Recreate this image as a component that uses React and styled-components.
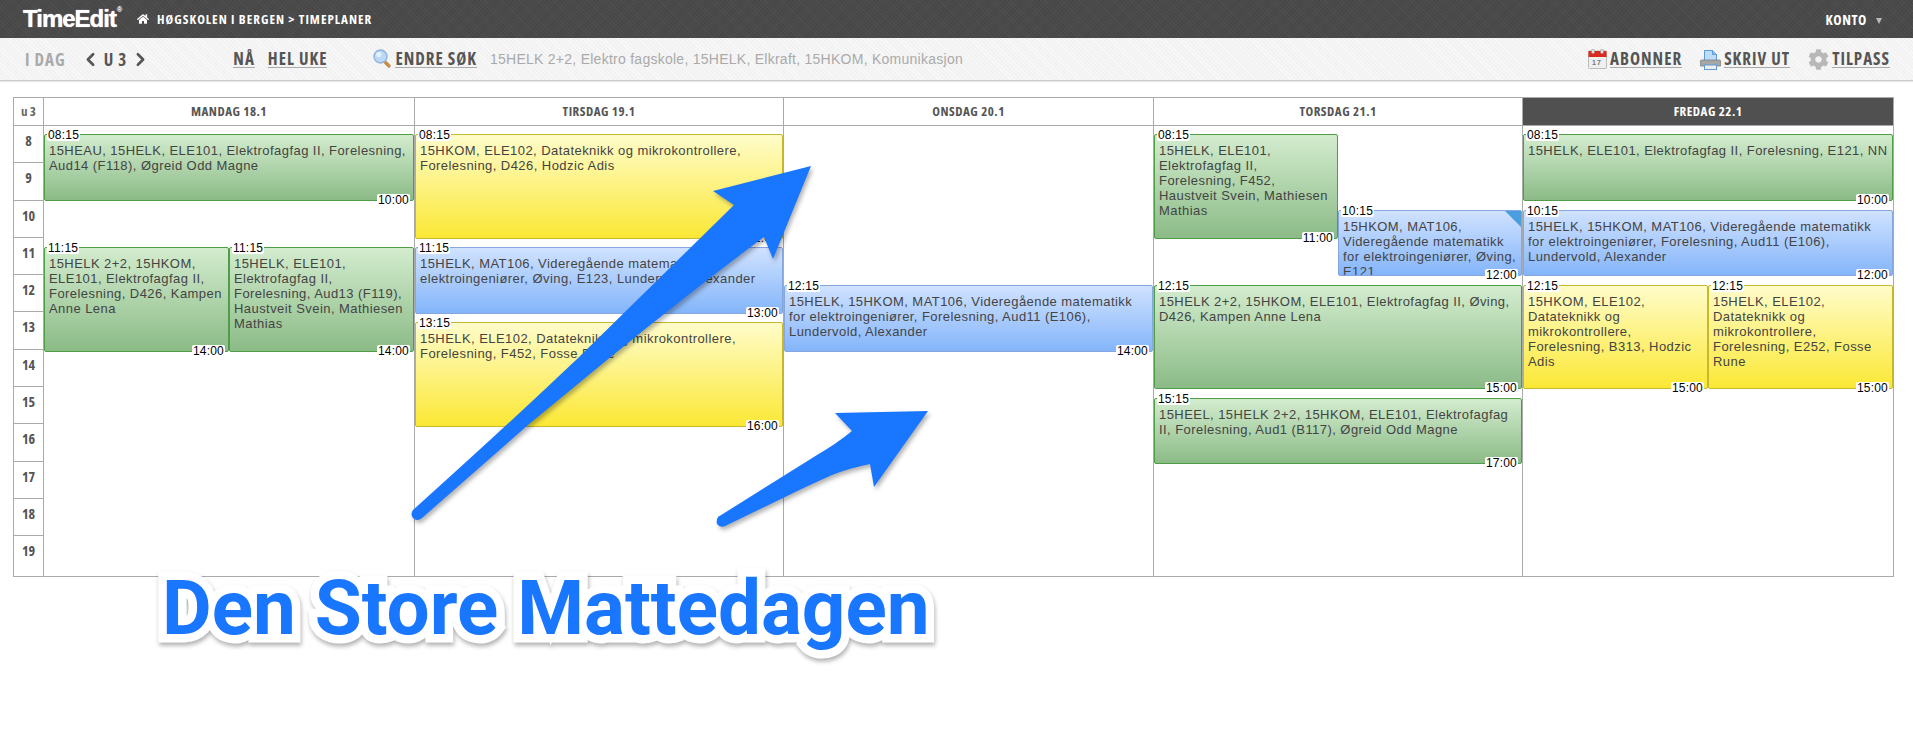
import React from 'react';
import styled, { createGlobalStyle } from 'styled-components';
import { FaCog, FaHome } from 'react-icons/fa';
import { ChevronLeft, ChevronRight } from 'lucide-react';

const HOUR = 37.6;
const narrow = `"Open Sans", sans-serif`;

const GlobalStyle = createGlobalStyle`
  html, body {
    margin: 0;
    padding: 0;
    background: #fff;
    font-family: "Liberation Sans", Arial, sans-serif;
  }
`;

const palette = {
  green: { from: '#d3ecce', to: '#8bbb87', line: '#4f9d46' },
  blue: { from: '#d0e2ff', to: '#84b5fa', line: '#86a6de' },
  yellow: { from: '#fffcca', to: '#fbe835', line: '#c7b82c' },
};

const days = [
  {
    name: 'MANDAG 18.1',
    events: [
      { start: 8.25, end: 10, from: '08:15', to: '10:00', color: 'green', text: '15HEAU, 15HELK, ELE101, Elektrofagfag II, Forelesning, Aud14 (F118), Øgreid Odd Magne' },
      { start: 11.25, end: 14, from: '11:15', to: '14:00', color: 'green', lane: 0, lanes: 2, text: '15HELK 2+2, 15HKOM, ELE101, Elektrofagfag II, Forelesning, D426, Kampen Anne Lena' },
      { start: 11.25, end: 14, from: '11:15', to: '14:00', color: 'green', lane: 1, lanes: 2, text: '15HELK, ELE101, Elektrofagfag II, Forelesning, Aud13 (F119), Haustveit Svein, Mathiesen Mathias' },
    ],
  },
  {
    name: 'TIRSDAG 19.1',
    events: [
      { start: 8.25, end: 11, from: '08:15', to: '11:00', color: 'yellow', text: '15HKOM, ELE102, Datateknikk og mikrokontrollere, Forelesning, D426, Hodzic Adis' },
      { start: 11.25, end: 13, from: '11:15', to: '13:00', color: 'blue', text: '15HELK, MAT106, Videregående matematikk for elektroingeniører, Øving, E123, Lundervold, Alexander' },
      { start: 13.25, end: 16, from: '13:15', to: '16:00', color: 'yellow', text: '15HELK, ELE102, Datateknikk og mikrokontrollere, Forelesning, F452, Fosse Rune' },
    ],
  },
  {
    name: 'ONSDAG 20.1',
    events: [
      { start: 12.25, end: 14, from: '12:15', to: '14:00', color: 'blue', text: '15HELK, 15HKOM, MAT106, Videregående matematikk for elektroingeniører, Forelesning, Aud11 (E106), Lundervold, Alexander' },
    ],
  },
  {
    name: 'TORSDAG 21.1',
    events: [
      { start: 8.25, end: 11, from: '08:15', to: '11:00', color: 'green', lane: 0, lanes: 2, text: '15HELK, ELE101, Elektrofagfag II, Forelesning, F452, Haustveit Svein, Mathiesen Mathias' },
      { start: 10.25, end: 12, from: '10:15', to: '12:00', color: 'blue', lane: 1, lanes: 2, flagged: true, text: '15HKOM, MAT106, Videregående matematikk for elektroingeniører, Øving, E121' },
      { start: 12.25, end: 15, from: '12:15', to: '15:00', color: 'green', text: '15HELK 2+2, 15HKOM, ELE101, Elektrofagfag II, Øving, D426, Kampen Anne Lena' },
      { start: 15.25, end: 17, from: '15:15', to: '17:00', color: 'green', text: '15HEEL, 15HELK 2+2, 15HKOM, ELE101, Elektrofagfag II, Forelesning, Aud1 (B117), Øgreid Odd Magne' },
    ],
  },
  {
    name: 'FREDAG 22.1',
    today: true,
    events: [
      { start: 8.25, end: 10, from: '08:15', to: '10:00', color: 'green', text: '15HELK, ELE101, Elektrofagfag II, Forelesning, E121, NN' },
      { start: 10.25, end: 12, from: '10:15', to: '12:00', color: 'blue', text: '15HELK, 15HKOM, MAT106, Videregående matematikk for elektroingeniører, Forelesning, Aud11 (E106), Lundervold, Alexander' },
      { start: 12.25, end: 15, from: '12:15', to: '15:00', color: 'yellow', lane: 0, lanes: 2, text: '15HKOM, ELE102, Datateknikk og mikrokontrollere, Forelesning, B313, Hodzic Adis' },
      { start: 12.25, end: 15, from: '12:15', to: '15:00', color: 'yellow', lane: 1, lanes: 2, text: '15HELK, ELE102, Datateknikk og mikrokontrollere, Forelesning, E252, Fosse Rune' },
    ],
  },
];

const hours = [8, 9, 10, 11, 12, 13, 14, 15, 16, 17, 18, 19];

const Page = styled.div`
  position: relative;
  width: 1913px;
  height: 749px;
  overflow: hidden;
`;

const TopBar = styled.header`
  height: 38px;
  display: flex;
  align-items: center;
  padding: 0 31px 0 23px;
  box-sizing: border-box;
  color: #fff;
  background-color: #4a4a4a;
  background-image:
    repeating-linear-gradient(45deg, rgba(255, 255, 255, 0.03) 0 1px, transparent 1px 3px),
    repeating-linear-gradient(-45deg, rgba(0, 0, 0, 0.06) 0 1px, transparent 1px 2px);
`;

const Logo = styled.div`
  font-size: 24px;
  font-weight: 700;
  letter-spacing: -1px;
  line-height: 38px;
  display: flex;
  text-shadow: 0 0 1px #fff;

  sup {
    font-size: 7px;
    font-weight: 400;
    letter-spacing: 0;
    line-height: 20px;
    margin-left: 1px;
  }
`;

const Crumbs = styled.div`
  display: flex;
  align-items: center;
  margin-left: 15px;
  font-family: ${narrow};
  font-stretch: 75%;
  font-size: 13px;
  font-weight: 700;
  letter-spacing: 1px;
  white-space: pre;

  svg {
    margin-right: 8px;
    font-size: 12px;
  }
`;

const Account = styled.div`
  margin-left: auto;
  display: flex;
  align-items: center;
  gap: 9px;
  font-family: ${narrow};
  font-stretch: 75%;
  font-size: 14px;
  font-weight: 700;
  letter-spacing: 0.6px;
`;

const Caret = styled.span`
  width: 0;
  height: 0;
  margin-top: 3px;
  border-left: 3px solid transparent;
  border-right: 3px solid transparent;
  border-top: 6px solid #bbb;
`;

const ToolBar = styled.nav`
  height: 43px;
  display: flex;
  align-items: center;
  padding: 0 23px 0 25px;
  box-sizing: border-box;
  background-color: #f2f2f2;
  background-image: repeating-linear-gradient(45deg, rgba(255, 255, 255, 0.5) 0 1px, transparent 1px 3px);
  border-bottom: 1px solid #ccc;
  box-shadow: 0 1px 1px #e8e8e8;
  font-family: ${narrow};
  font-stretch: 75%;
  font-weight: 700;
  font-size: 17px;
  letter-spacing: 1px;
  color: #555;
`;

const Today = styled.span`
  color: #aaa;
  margin-right: 14px;
`;

const Week = styled.span`
  display: flex;
  align-items: center;
  gap: 3px;
  margin-right: 82px;
  white-space: pre;
`;

const NavLink = styled.span`
  border-bottom: 1px solid #aaa;
  line-height: 17px;
  margin-right: ${props => props.$gap || 0}px;
  white-space: pre;
`;

const Query = styled.span`
  font-family: "Liberation Sans", Arial, sans-serif;
  font-weight: 400;
  font-size: 14px;
  letter-spacing: 0.26px;
  color: #aaa;
  margin-left: 13px;
`;

const RightTools = styled.div`
  margin-left: auto;
  display: flex;
  align-items: center;
`;

const Tool = styled.span`
  display: flex;
  align-items: center;
  gap: 3px;
  margin-left: ${props => props.$gap || 0}px;
`;

const Table = styled.section`
  display: grid;
  grid-template-columns: 29px 371px 369px 370px 369px 1fr;
  grid-template-rows: 28px 450px;
  width: 1881px;
  margin: 16px 0 0 13px;
  box-sizing: border-box;
  border: 1px solid #aaa;
  background: #fff;
`;

const Corner = styled.div`
  border-bottom: 1px solid #aaa;
  font-family: ${narrow};
  font-stretch: 75%;
  font-weight: 700;
  font-size: 13px;
  color: #666;
  text-align: center;
  line-height: 27px;
`;

const DayHead = styled.div`
  border-bottom: 1px solid #aaa;
  border-left: 1px solid #aaa;
  font-family: ${narrow};
  font-stretch: 75%;
  font-weight: 700;
  font-size: 13px;
  letter-spacing: 0.5px;
  text-align: center;
  line-height: 27px;
  color: ${props => (props.$today ? '#fff' : '#555')};
  background: ${props => (props.$today ? '#505050' : '#fff')};
`;

const HourColumn = styled.div`
  display: grid;
  grid-auto-rows: 37.3px;
`;

const HourCell = styled.div`
  border-bottom: 1px solid #aaa;
  font-family: ${narrow};
  font-stretch: 75%;
  font-weight: 700;
  font-size: 14px;
  color: #555;
  text-align: center;
  line-height: 29px;

  &:last-child {
    border-bottom: none;
  }
`;

const DayColumn = styled.div`
  position: relative;
  border-left: 1px solid #aaa;
`;

const EventBox = styled.article`
  position: absolute;
  box-sizing: border-box;
  border: 1px solid ${props => palette[props.$color].line};
  border-radius: 2px;
  background: linear-gradient(${props => palette[props.$color].from}, ${props => palette[props.$color].to});
`;

const EventText = styled.div`
  height: 100%;
  padding: 8px 3px 0 4px;
  box-sizing: border-box;
  overflow: hidden;
  font-size: 13px;
  line-height: 15px;
  letter-spacing: 0.44px;
  color: #444;
`;

const TimeLabel = styled.span`
  position: absolute;
  ${props => (props.$end ? 'right: 3px; bottom: -6px;' : 'left: 2px; top: -6px;')}
  padding: 0 1px;
  background: #fff;
  border-radius: 2px;
  font-size: 12px;
  line-height: 12px;
  letter-spacing: 0.2px;
  color: #000;
`;

const Flag = styled.span`
  position: absolute;
  top: 0;
  right: 0;
  width: 0;
  height: 0;
  border-top: 16px solid #4a9ede;
  border-left: 16px solid transparent;
`;

const ArrowLayer = styled.svg`
  position: absolute;
  left: 0;
  top: 0;
  pointer-events: none;
  filter: drop-shadow(2px 3px 2px rgba(0, 0, 0, 0.3));
`;

const Title = styled.h1`
  position: absolute;
  left: 162px;
  top: 563px;
  margin: 0;
  font-family: Roboto, sans-serif;
  font-size: 76.4px;
  font-weight: 700;
  line-height: 90px;
  white-space: pre;
  color: #1976ff;
  -webkit-text-stroke: 17px #fff;
  paint-order: stroke fill;
  filter: drop-shadow(1px 3px 2px rgba(0, 0, 0, 0.3));
`;

function Event({ ev }) {
  const lane = ev.lane || 0;
  const lanes = ev.lanes || 1;
  const box = {
    top: (ev.start - 8) * HOUR - 1,
    height: (ev.end - ev.start) * HOUR + 1,
    left: `${(lane / lanes) * 100}%`,
    width: `${100 / lanes}%`,
  };
  return (
    <EventBox $color={ev.color} style={box}>
      <EventText>{ev.text}</EventText>
      {ev.flagged ? <Flag /> : null}
      <TimeLabel>{ev.from}</TimeLabel>
      <TimeLabel $end>{ev.to}</TimeLabel>
    </EventBox>
  );
}

const Magnifier = () => (
  <svg width="19" height="20" viewBox="0 0 19 20">
    <path d="M11 12l5 5" stroke="#c98a4a" strokeWidth="3.4" strokeLinecap="round" />
    <circle cx="7.5" cy="7.5" r="6.5" fill="#bcd9f5" stroke="#8db4dc" strokeWidth="1.4" />
    <circle cx="5.8" cy="5.5" r="2.6" fill="#e6f2fd" />
  </svg>
);

const CalendarIcon = () => (
  <svg width="19" height="20" viewBox="0 0 19 20">
    <rect x="0.5" y="2" width="18" height="17.5" rx="1" fill="#efefef" stroke="#bbb" />
    <rect x="0.5" y="2" width="18" height="6" fill="#d92b20" />
    <rect x="3.5" y="0.5" width="3" height="4" rx="1" fill="#ddd" stroke="#888" strokeWidth="0.5" />
    <rect x="12.5" y="0.5" width="3" height="4" rx="1" fill="#ddd" stroke="#888" strokeWidth="0.5" />
    <text x="4" y="16" fontSize="7" fill="#777" fontFamily="Liberation Sans">17</text>
  </svg>
);

const PrinterIcon = () => (
  <svg width="21" height="21" viewBox="0 0 21 21">
    <path d="M4.5 12V1.5h8l4 4V12z" fill="#bcdcf8" stroke="#5f9bd8" />
    <path d="M12.5 1.5v4h4" fill="#8fbfee" stroke="#5f9bd8" />
    <path d="M1.5 11h18a1 1 0 0 1 1 1v5h-20v-5a1 1 0 0 1 1-1z" fill="#a6a6a6" stroke="#777" strokeWidth="0.7" />
    <rect x="4.5" y="16" width="12" height="4.5" fill="#eee" stroke="#5f9bd8" />
  </svg>
);

const Hand = () => (
  <ArrowLayer width="1913" height="749" viewBox="0 0 1913 749">
    <path
      d="M413 510 Q500 432 576 360 L734 205 L713 191 L811 166 L773 259 L764 237 Q690 292 607 360 L528 425 L422 518 Q417 522 413 518 Q410 514 413 510z"
      fill="#1976ff"
    />
    <path
      d="M718 517 L817 455 Q836 444 852 431 L835 413 L928 411 L874 487 L870 464 Q850 468 832 475 Q805 487 783 498 L725 526 Q720 528 717 524 Q716 520 718 517z"
      fill="#1976ff"
    />
  </ArrowLayer>
);

export default function App() {
  return (
    <Page>
      <GlobalStyle />
      <TopBar>
        <Logo>TimeEdit<sup>®</sup></Logo>
        <Crumbs>
          <FaHome />
          HØGSKOLEN I BERGEN &gt; TIMEPLANER
        </Crumbs>
        <Account>KONTO <Caret /></Account>
      </TopBar>
      <ToolBar>
        <Today>I DAG</Today>
        <Week>
          <ChevronLeft size={21} strokeWidth={3} />
          U 3
          <ChevronRight size={21} strokeWidth={3} />
        </Week>
        <NavLink $gap={13}>NÅ</NavLink>
        <NavLink $gap={46}>HEL UKE</NavLink>
        <Tool>
          <Magnifier />
          <NavLink>ENDRE SØK</NavLink>
        </Tool>
        <Query>15HELK 2+2, Elektro fagskole, 15HELK, Elkraft, 15HKOM, Komunikasjon</Query>
        <RightTools>
          <Tool>
            <CalendarIcon />
            <NavLink>ABONNER</NavLink>
          </Tool>
          <Tool $gap={18}>
            <PrinterIcon />
            <NavLink>SKRIV UT</NavLink>
          </Tool>
          <Tool $gap={18}>
            <FaCog size={21} color="#b8b8b8" />
            <NavLink>TILPASS</NavLink>
          </Tool>
        </RightTools>
      </ToolBar>
      <Table>
        <Corner>u 3</Corner>
        {days.map(day => (
          <DayHead key={day.name} $today={day.today}>{day.name}</DayHead>
        ))}
        <HourColumn>
          {hours.map(hour => <HourCell key={hour}>{hour}</HourCell>)}
        </HourColumn>
        {days.map(day => (
          <DayColumn key={day.name}>
            {day.events.map(ev => <Event key={ev.from + ev.text} ev={ev} />)}
          </DayColumn>
        ))}
      </Table>
      <Hand />
      <Title>Den Store Mattedagen</Title>
    </Page>
  );
}
